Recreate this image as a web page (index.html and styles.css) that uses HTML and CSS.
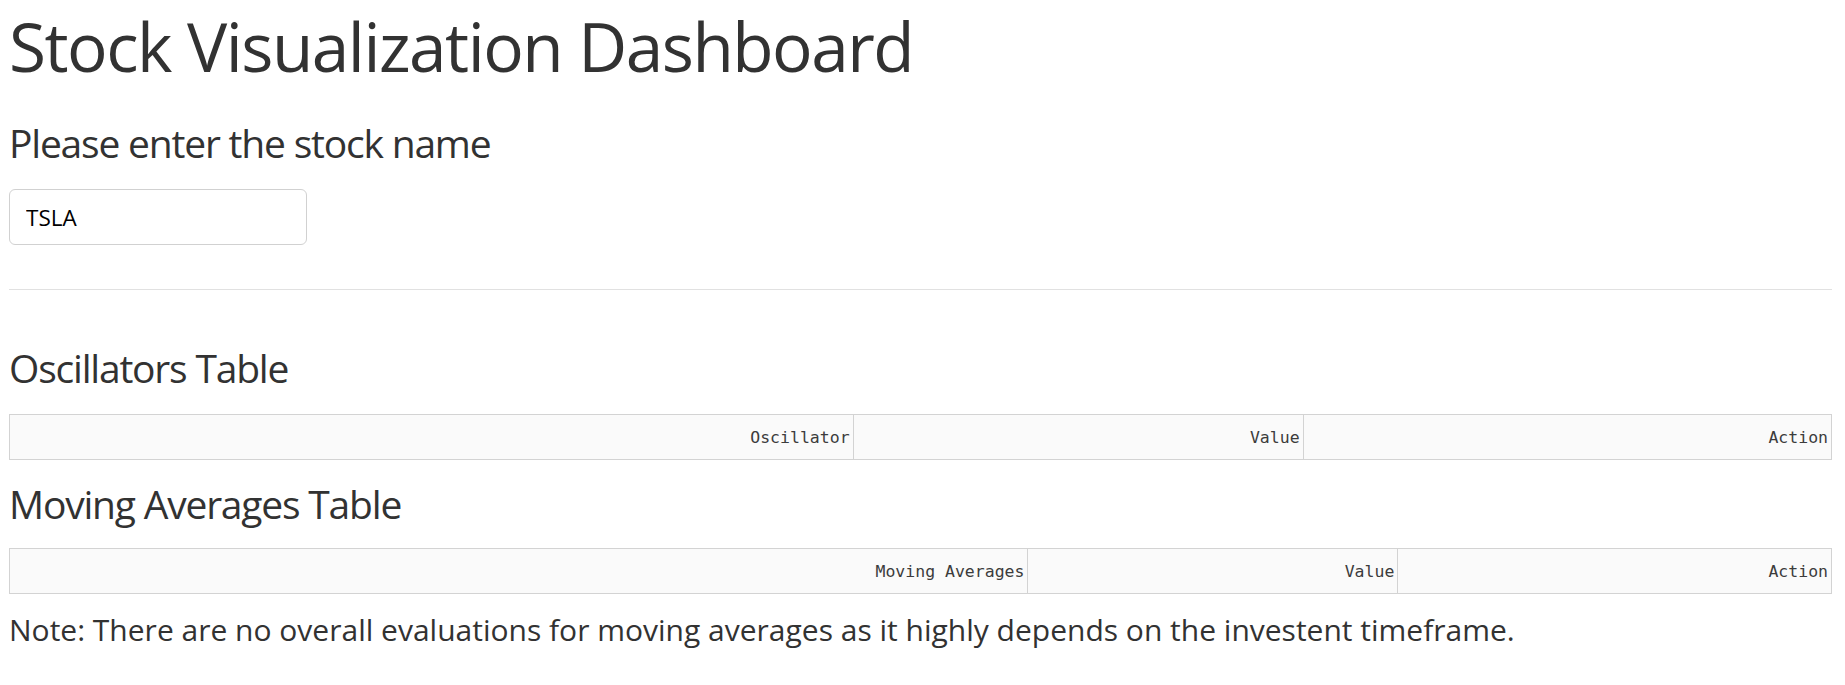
FILE: index.html
```html
<!DOCTYPE html>
<html lang="en">
<head>
<meta charset="utf-8">
<title>Stock Visualization Dashboard</title>
<link rel="stylesheet" href="styles.css">
</head>
<body>
<div class="page">
  <h1 class="title">Stock Visualization Dashboard</h1>
  <h4 class="prompt">Please enter the stock name</h4>
  <input class="stock-input" type="text" value="TSLA">
  <hr class="divider">
  <h4 class="section osc-title">Oscillators Table</h4>
  <table class="data-table osc-table">
    <thead>
      <tr>
        <th class="c1">Oscillator</th>
        <th class="c2">Value</th>
        <th class="c3">Action</th>
      </tr>
    </thead>
  </table>
  <h4 class="section ma-title">Moving Averages Table</h4>
  <table class="data-table ma-table">
    <thead>
      <tr>
        <th class="c1">Moving Averages</th>
        <th class="c2">Value</th>
        <th class="c3">Action</th>
      </tr>
    </thead>
  </table>
  <p class="note">Note: There are no overall evaluations for moving averages as it highly depends on the investent timeframe.</p>
</div>
</body>
</html>
```

FILE: styles.css
```css
html, body {
  margin: 0;
  padding: 0;
  background: #ffffff;
}
body {
  font-family: "Open Sans", "Liberation Sans", sans-serif;
  color: #323232;
}
.page {
  padding: 6px 13px 0 9px;
}
.title {
  margin: 0;
  font-size: 67.5px;
  line-height: 81px;
  font-weight: 400;
  letter-spacing: -1.5px;
}
.prompt, .section {
  margin: 0;
  font-size: 39px;
  line-height: 52.65px;
  font-weight: 400;
  letter-spacing: -1.2px;
}
.prompt {
  margin-top: 29.5px;
}
.stock-input {
  display: block;
  box-sizing: border-box;
  margin-top: 20px;
  width: 298px;
  height: 56px;
  padding: 0 16px;
  border: 1px solid #d1d1d1;
  border-radius: 6px;
  font-family: "Open Sans", "Liberation Sans", sans-serif;
  font-size: 22.5px;
  color: #000;
  background: #fff;
  outline: none;
}
.divider {
  margin: 44px 0 0 0;
  border: 0;
  border-top: 1px solid #e1e1e1;
  height: 0;
}
.osc-title {
  margin-top: 51.5px;
}
.data-table {
  width: 100%;
  border-collapse: collapse;
  table-layout: fixed;
  margin-top: 20px;
}
.data-table th {
  height: 45px;
  padding: 0 3px;
  box-sizing: border-box;
  border: 1px solid #d3d3d3;
  background: #fafafa;
  text-align: right;
  font-family: "DejaVu Sans Mono", "Liberation Mono", monospace;
  font-size: 16.5px;
  font-weight: 400;
  color: #3c3c3c;
  white-space: nowrap;
}
.osc-table .c1 { width: 46.3%; }
.osc-table .c2 { width: 24.7%; }
.ma-table .c1 { width: 55.9%; }
.ma-table .c2 { width: 20.3%; }
.ma-title {
  margin-top: 18px;
}
.ma-table {
  margin-top: 17.5px;
}
.note {
  margin: 11.5px 0 0 0;
  font-size: 30px;
  line-height: 48px;
  font-weight: 400;
}
```
